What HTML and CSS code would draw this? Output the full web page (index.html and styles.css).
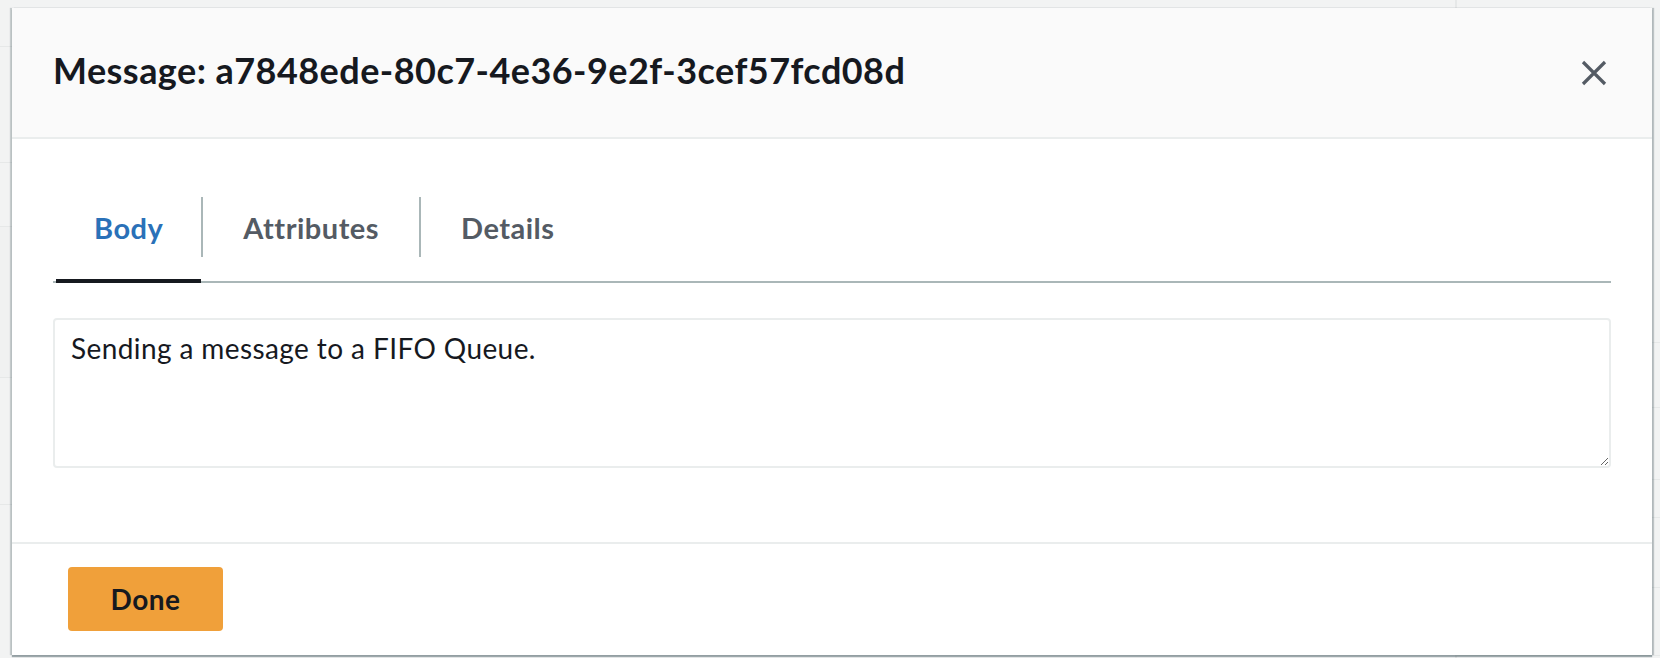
FILE: index.html
```html
<!DOCTYPE html>
<html lang="en">
<head>
<meta charset="utf-8">
<title>Message</title>
<link rel="stylesheet" href="styles.css">
</head>
<body>
<div class="backdrop">
  <div class="bd-main">
    <div class="bd-row r1"></div>
    <div class="bd-row r2"></div>
    <div class="bd-row r3"></div>
    <div class="bd-row r4"></div>
    <div class="bd-row r5"></div>
  </div>
  <div class="bd-side">
    <div class="bd-row s1"></div>
    <div class="bd-row s2"></div>
    <div class="bd-row s3"></div>
    <div class="bd-row s4"></div>
    <div class="bd-row s5"></div>
    <div class="bd-row s6"></div>
  </div>
</div>

<div class="modal" role="dialog" aria-labelledby="modal-title">
  <header class="modal-header">
    <h2 class="modal-title" id="modal-title">Message: a7848ede-80c7-4e36-9e2f-3cef57fcd08d</h2>
    <button class="close" aria-label="Close">
      <svg width="26" height="26" viewBox="0 0 26 26" aria-hidden="true">
        <path d="M2 2 L24 24 M24 2 L2 24" stroke="#545b64" stroke-width="3.2" fill="none"/>
      </svg>
    </button>
  </header>
  <div class="modal-body">
    <div class="tabs">
      <div class="tab active"><span class="tab-label">Body</span></div>
      <div class="tab"><span class="tab-label">Attributes</span></div>
      <div class="tab"><span class="tab-label">Details</span></div>
    </div>
    <textarea class="msg" readonly>Sending a message to a FIFO Queue.</textarea>
  </div>
  <footer class="modal-footer">
    <button class="btn-primary">Done</button>
  </footer>
</div>
</body>
</html>
```

FILE: styles.css
```css
* { box-sizing: border-box; }

html, body {
  margin: 0;
  padding: 0;
  height: 100%;
}

body {
  background: #f2f3f3;
  font-family: Lato, "Open Sans", "Liberation Sans", sans-serif;
  color: #16191f;
  position: relative;
  overflow: hidden;
}

/* ---------- dimmed page behind the dialog ---------- */
.backdrop {
  display: flex;
  height: 100%;
}
.bd-main {
  width: 1455px;
  display: flex;
  flex-direction: column;
}
.bd-side {
  flex: 1;
  border-left: 2px solid #e6e8e8;
  display: flex;
  flex-direction: column;
}
.bd-row {
  border-bottom: 1px solid #e6e8e8;
}
.r1 { height: 47px; }
.r2 { height: 116px; }
.r3 { height: 64px; }
.r4 { height: 151px; background: #f0f1f1; }
.r5 { height: 127px; }
.s1 { height: 343px; }
.s2 { height: 65px; }
.s3 { height: 72px; }
.s4 { height: 38px; }
.s5 { height: 70px; }
.s6 { height: 68px; }

/* ---------- dialog ---------- */
.modal {
  position: absolute;
  left: 12px;
  top: 8px;
  width: 1640px;
  height: 647px;
  background: #fff;
  display: flex;
  flex-direction: column;
  box-shadow: 0 2px 1px 0 rgba(0, 28, 36, 0.35),
              2px 0 1px 0 rgba(0, 28, 36, 0.22),
              -2px 0 1px 0 rgba(0, 28, 36, 0.18);
}

.modal-header {
  height: 131px;
  flex: none;
  background: #fafafa;
  border-bottom: 2px solid #eaeded;
  display: flex;
  align-items: center;
  justify-content: space-between;
  padding: 0 41px;
}

.modal-title {
  margin: 0 0 5px 0;
  font-size: 36px;
  font-weight: 700;
  letter-spacing: 0.45px;
  color: #16191f;
  line-height: normal;
}

.close {
  width: 34px;
  height: 34px;
  border: 0;
  padding: 0;
  background: transparent;
  display: flex;
  align-items: center;
  justify-content: center;
}

.modal-body {
  flex: none;
  padding: 58px 41px 74px;
  display: flex;
  flex-direction: column;
}

.tabs {
  display: flex;
  border-bottom: 2px solid #aab7b8;
  padding-left: 3px;
}

.tab {
  padding-bottom: 22px;
  border-bottom: 4px solid transparent;
  margin-bottom: -2px;
}
.tab.active { border-bottom-color: #16191f; }

.tab-label {
  height: 60px;
  display: flex;
  align-items: center;
  padding: 0 40px;
  font-size: 29px;
  font-weight: 700;
  letter-spacing: 0.5px;
  color: #545b64;
}
.tab.active .tab-label { padding: 0 38px; }
.tab + .tab .tab-label { border-left: 2px solid #aab7b8; }
.tab.active .tab-label { color: #2a71b8; }

.msg {
  margin-top: 35px;
  height: 150px;
  width: 100%;
  border: 2px solid #eaeded;
  border-radius: 4px;
  padding: 8px 16px;
  font-family: Lato, "Open Sans", "Liberation Sans", sans-serif;
  font-size: 28px;
  letter-spacing: 0.4px;
  line-height: 40px;
  color: #16191f;
  resize: vertical;
  outline: none;
}

.modal-footer {
  flex: 1;
  border-top: 2px solid #eaeded;
  padding: 23px 41px 24px 56px;
  display: flex;
  align-items: flex-start;
}

.btn-primary {
  width: 155px;
  height: 64px;
  border: 0;
  border-radius: 4px;
  background: #f0a03a;
  color: #16191f;
  font-family: Lato, "Open Sans", "Liberation Sans", sans-serif;
  font-size: 28px;
  font-weight: 700;
  letter-spacing: 0.5px;
  padding: 0;
}
```
